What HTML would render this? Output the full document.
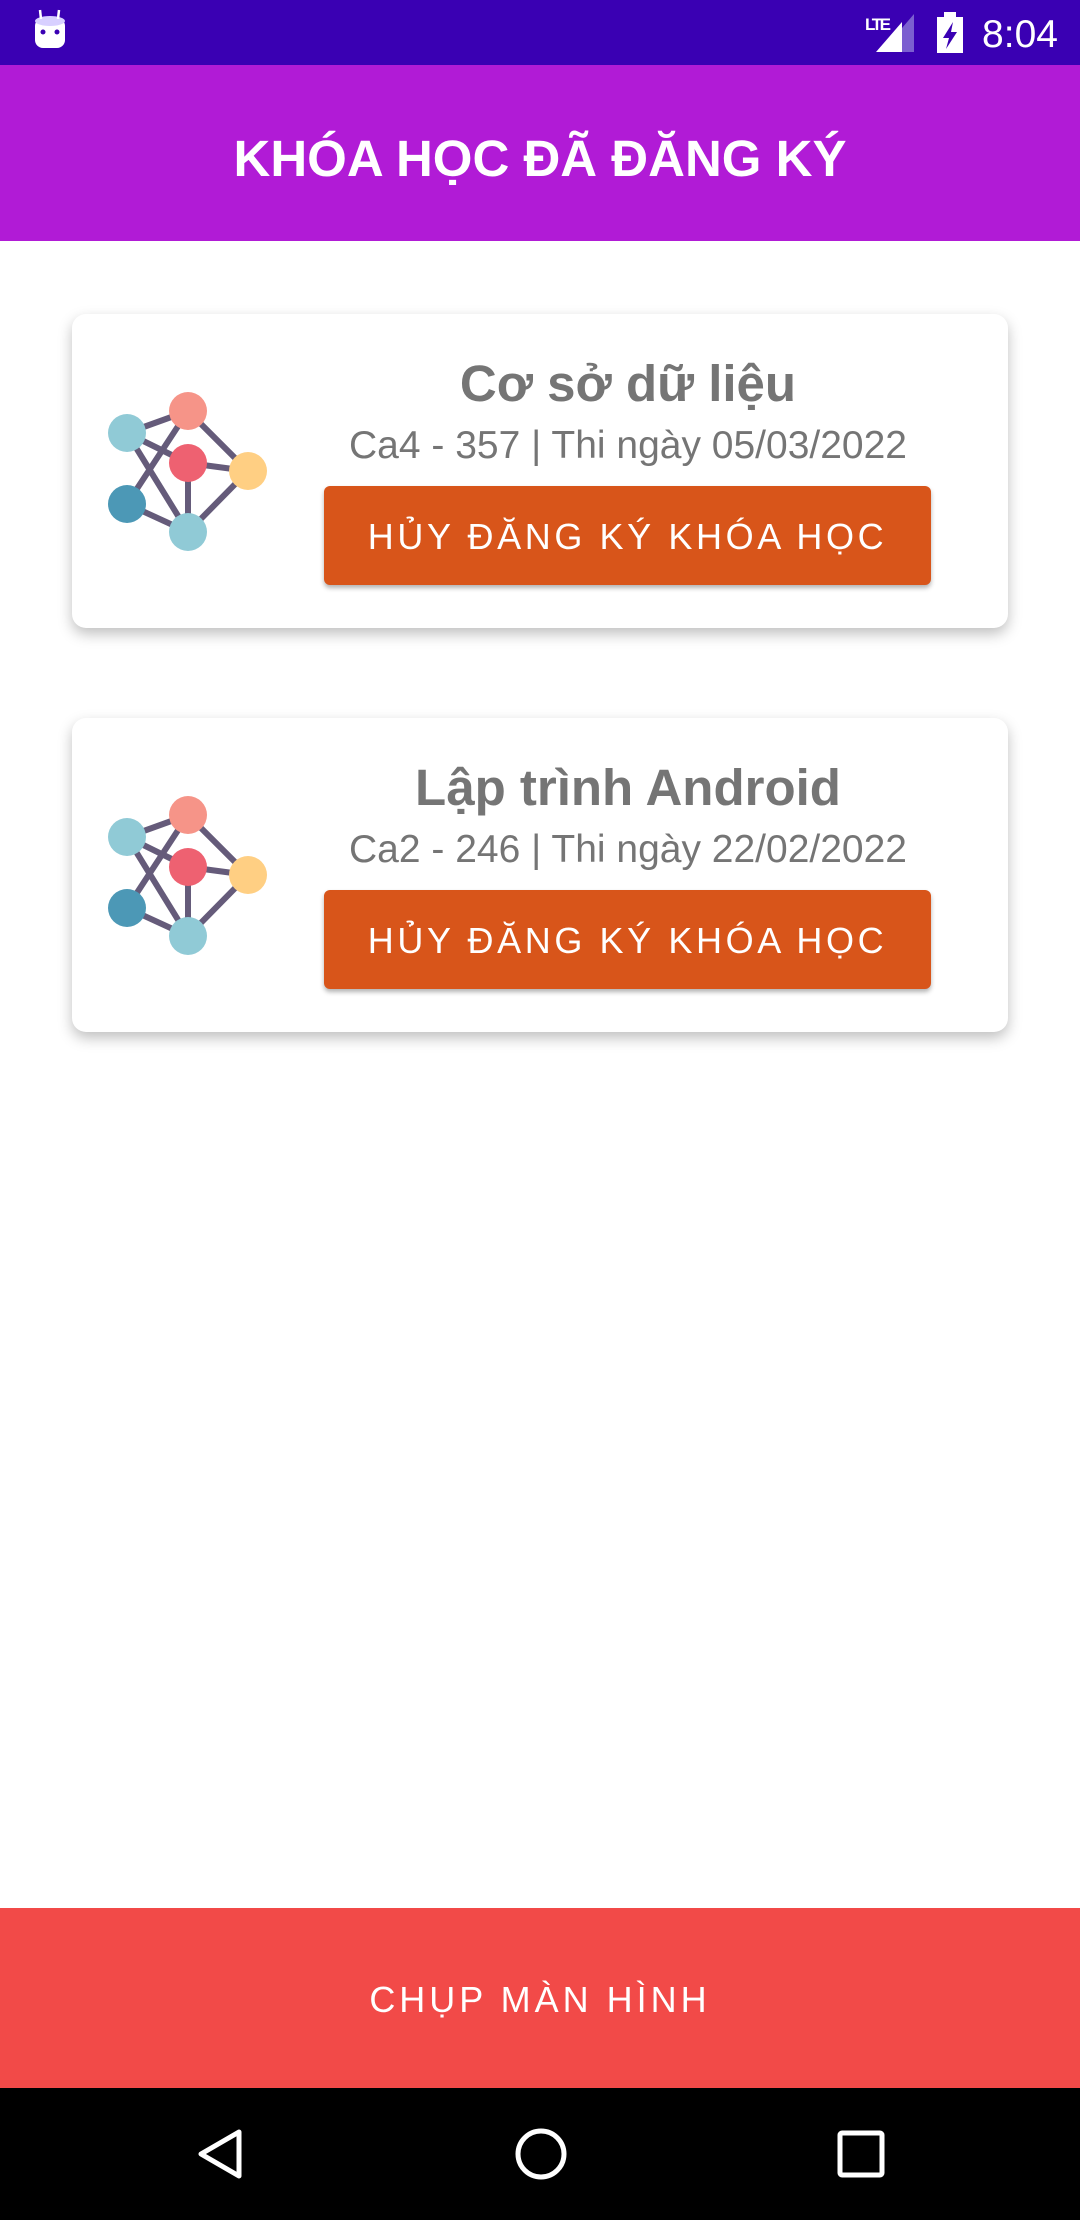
<!DOCTYPE html>
<html><head><meta charset="utf-8"><style>
*{margin:0;padding:0;box-sizing:border-box}
body{width:1080px;height:2220px;background:#fff;font-family:"Liberation Sans",Roboto,sans-serif;position:relative;overflow:hidden}
.sb{position:absolute;top:0;left:0;width:1080px;height:65px;background:#3a00b3}
.ab{position:absolute;top:65px;left:0;width:1080px;height:176px;background:#b11bd6;color:#fff;font-weight:bold;font-size:51px;text-align:center;line-height:188px}
.card{position:absolute;left:72px;width:936px;height:314px;background:#fff;border-radius:14px;box-shadow:0 6px 14px rgba(0,0,0,.25)}
.t{position:absolute;left:250px;width:612px;text-align:center;color:#757575;white-space:nowrap}
.title{top:40px;font-size:51px;font-weight:bold}
.sub{top:110px;font-size:39px}
.btn{position:absolute;left:252px;top:172px;width:607px;height:99px;background:#d8551a;border-radius:6px;color:#fff;font-size:36px;letter-spacing:3.6px;text-align:center;line-height:101px;box-shadow:0 3px 5px rgba(0,0,0,.3)}
.bb{position:absolute;top:1908px;left:0;width:1080px;height:180px;background:#f24a48;color:#fff;font-size:36px;letter-spacing:4px;text-align:center;line-height:184px}
.nav{position:absolute;top:2088px;left:0;width:1080px;height:132px;background:#000}
</style></head><body>
<div class="sb">
<svg width="1080" height="65" style="position:absolute;left:0;top:0">
<rect x="35" y="18" width="30" height="30" rx="8" fill="#fff"/>
<ellipse cx="50" cy="21" rx="15" ry="5" fill="#d8d0ff"/>
<line x1="40" y1="10" x2="41" y2="19" stroke="#fff" stroke-width="2.5"/><line x1="59" y1="10" x2="58" y2="19" stroke="#fff" stroke-width="2.5"/>
<circle cx="43" cy="32" r="2.5" fill="#3a00b3"/><circle cx="57" cy="32" r="2.5" fill="#3a00b3"/>
<polygon points="876,52 902,52 902,22" fill="#fff"/><polygon points="902,52 914,52 914,14 902,28" fill="#7b5fd0"/>
<text x="865" y="30" fill="#fff" font-size="17" font-weight="bold" textLength="26">LTE</text>
<rect x="937" y="17" width="26" height="36" fill="#fff"/><rect x="944" y="12" width="12" height="6" fill="#fff"/>
<polygon points="953,22 943,38 949,38 946,49 957,32 951,32" fill="#3a00b3"/>
<text x="982" y="47" fill="#fff" font-size="39" textLength="76">8:04</text>
</svg>
</div>
<div class="ab">KHÓA HỌC ĐÃ ĐĂNG KÝ</div>

<div class="card" style="top:314px">
<svg width="240" height="260" style="position:absolute;left:0;top:0" viewBox="72 314 240 260">
<g stroke="#655b7a" stroke-width="6" fill="none">
<line x1="127" y1="433" x2="188" y2="411"/><line x1="127" y1="433" x2="188" y2="463"/><line x1="127" y1="433" x2="188" y2="532"/>
<line x1="188" y1="411" x2="127" y2="504"/><line x1="188" y1="411" x2="248" y2="471"/><line x1="188" y1="463" x2="248" y2="471"/>
<line x1="188" y1="463" x2="188" y2="532"/><line x1="127" y1="504" x2="188" y2="532"/><line x1="248" y1="471" x2="188" y2="532"/>
</g>
<circle cx="188" cy="411" r="19" fill="#f69488"/><circle cx="127" cy="433" r="19" fill="#90cad6"/><circle cx="188" cy="463" r="19" fill="#ee6171"/>
<circle cx="248" cy="471" r="19" fill="#ffcf83"/><circle cx="127" cy="504" r="19" fill="#4c98b6"/><circle cx="188" cy="532" r="19" fill="#90cad6"/>
</svg>
<div class="t title">Cơ sở dữ liệu</div>
<div class="t sub">Ca4 - 357 | Thi ngày 05/03/2022</div>
<div class="btn">HỦY ĐĂNG KÝ KHÓA HỌC</div>
</div>

<div class="card" style="top:718px">
<svg width="240" height="260" style="position:absolute;left:0;top:0" viewBox="72 314 240 260">
<g stroke="#655b7a" stroke-width="6" fill="none">
<line x1="127" y1="433" x2="188" y2="411"/><line x1="127" y1="433" x2="188" y2="463"/><line x1="127" y1="433" x2="188" y2="532"/>
<line x1="188" y1="411" x2="127" y2="504"/><line x1="188" y1="411" x2="248" y2="471"/><line x1="188" y1="463" x2="248" y2="471"/>
<line x1="188" y1="463" x2="188" y2="532"/><line x1="127" y1="504" x2="188" y2="532"/><line x1="248" y1="471" x2="188" y2="532"/>
</g>
<circle cx="188" cy="411" r="19" fill="#f69488"/><circle cx="127" cy="433" r="19" fill="#90cad6"/><circle cx="188" cy="463" r="19" fill="#ee6171"/>
<circle cx="248" cy="471" r="19" fill="#ffcf83"/><circle cx="127" cy="504" r="19" fill="#4c98b6"/><circle cx="188" cy="532" r="19" fill="#90cad6"/>
</svg>
<div class="t title">Lập trình Android</div>
<div class="t sub">Ca2 - 246 | Thi ngày 22/02/2022</div>
<div class="btn">HỦY ĐĂNG KÝ KHÓA HỌC</div>
</div>

<div class="bb">CHỤP MÀN HÌNH</div>
<div class="nav">
<svg width="1080" height="132">
<polygon points="201,66 239,44 239,88" fill="none" stroke="#fff" stroke-width="5" stroke-linejoin="round"/>
<circle cx="541" cy="66" r="23" fill="none" stroke="#fff" stroke-width="5"/>
<rect x="840" y="45" width="42" height="42" rx="2" fill="none" stroke="#fff" stroke-width="5"/>
</svg>
</div>
</body></html>
